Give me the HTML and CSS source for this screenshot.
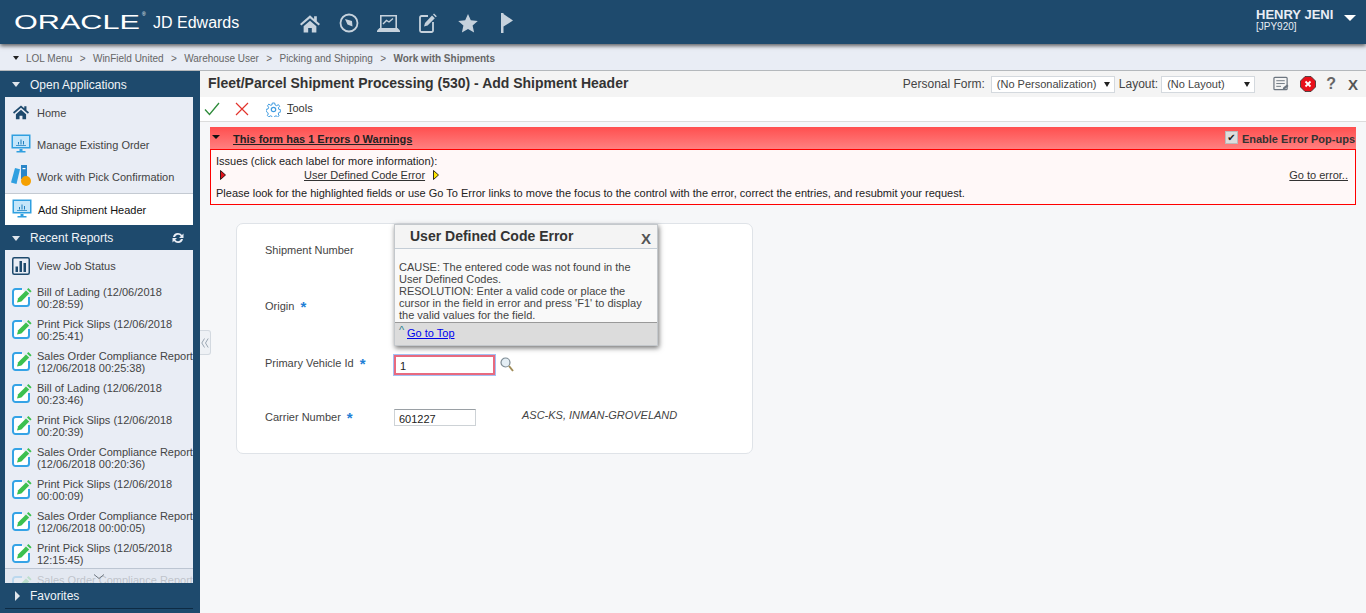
FILE: index.html
```html
<!DOCTYPE html>
<html>
<head>
  <title>Fleet/Parcel Shipment Processing - Add Shipment Header</title>
  <link rel="stylesheet" href="styles.css">
</head>
<body>
  <svg class="defs" width="0" height="0">
    <symbol id="i-monitor" viewBox="0 0 20 20">
      <rect x="0.5" y="0.5" width="19" height="14" fill="#2f9fe0"/>
      <rect x="2" y="2" width="16" height="11" fill="#c5e6fa"/>
      <path d="M7 10.500V8h1v2.500zM9.500 10.500V5.500h1v5zM12 10.500V7h1v3.500zM5 11h10v.7H5z" fill="#1f7fbe"/>
      <path d="M8.500 15h3v2h3v1.500h-9V17h3z" fill="#2f9fe0"/>
    </symbol>
    <symbol id="i-edit" viewBox="0 0 20 20">
      <path d="M10 2H3.500A2.500 2.500 0 0 0 1 4.500v12A2.500 2.500 0 0 0 3.500 19h11a2.500 2.500 0 0 0 2.500-2.500V10" fill="#fff" stroke="#35a3e6" stroke-width="2"/>
      <path d="M5 15.500l1.200-4.300L14 3.400l3.200 3.200-7.800 7.800z" fill="#3cc04f"/>
      <path d="M15 2.400l1.400-1.400 3.200 3.200-1.400 1.400z" fill="#3cc04f"/>
    </symbol>
  </svg>

  <header class="topbar">
    <div class="brand">
      <span class="oracle">ORACLE</span><sup class="reg">&reg;</sup>
      <span class="jde">JD Edwards</span>
    </div>
    <nav class="topnav">
      <svg width="20" height="19" viewBox="0 0 22 20"><path d="M11 1L0 10.500l1.500 1.800L11 4.300l9.500 8 1.500-1.800-3.500-3V2h-3v3z M4 13l7-6 7 6v7h-5v-5H9v5H4z" fill="#c6d2dd"/></svg>
      <svg width="20" height="20" viewBox="0 0 20 20"><circle cx="10" cy="10" r="8.500" fill="none" stroke="#c6d2dd" stroke-width="1.800"/><path d="M6 6l7 2 .5 5.500-5-2z" fill="#c6d2dd"/></svg>
      <svg width="23" height="18" viewBox="0 0 23 18"><path d="M3.800 14V1.800h15.400V14" fill="none" stroke="#c6d2dd" stroke-width="1.600"/><path d="M6 10l3.500-3.500 2.500 1.500 4-3.500" fill="none" stroke="#c6d2dd" stroke-width="1.400"/><path d="M2.500 14h18l2.500 2.500V18H0v-1.500z" fill="#c6d2dd"/></svg>
      <svg width="18" height="20" viewBox="0 0 18 20"><path d="M9 3H2.500A1.500 1.500 0 0 0 1 4.500v13A1.500 1.500 0 0 0 2.500 19h10a1.500 1.500 0 0 0 1.500-1.500V9" fill="none" stroke="#c6d2dd" stroke-width="1.800"/><path d="M5 13.500l1-3.500 7-7.500 2.800 2.700-7.200 7.300zM14 1.500l1-1 2.800 2.700-1 1z" fill="#c6d2dd"/></svg>
      <svg width="20" height="19" viewBox="0 0 20 19"><path d="M10 0l2.800 6.300 7 .7-5.200 4.600 1.500 6.900-6.100-3.600L3.900 18.500l1.500-6.900L.2 7l7-.7z" fill="#c6d2dd"/></svg>
      <svg width="12" height="20" viewBox="0 0 12 20"><path d="M0 0h2.500v20H0z M2.500 1L12 7.500l-9.500 6z" fill="#c6d2dd"/></svg>
    </nav>
    <div class="user">
      <div>
        <div class="user-name">HENRY JENI</div>
        <div class="user-env">[JPY920]</div>
      </div>
      <span class="user-caret"></span>
    </div>
  </header>

  <div class="crumbs">
    <span class="crumb-caret"></span>
    <span>LOL Menu</span><i>&gt;</i>
    <span>WinField United</span><i>&gt;</i>
    <span>Warehouse User</span><i>&gt;</i>
    <span>Picking and Shipping</span><i>&gt;</i>
    <b>Work with Shipments</b>
  </div>

  <div class="layout">
    <aside class="sidebar">
      <div class="side-head head-open"><span class="tri-down"></span>Open Applications</div>
      <ul class="side-list">
        <li class="side-item">
          <svg class="side-icon home-icon" width="16" height="16" viewBox="0 0 22 20"><path d="M11 1L0 10.500l1.500 1.800L11 4.300l9.500 8 1.500-1.800-3.500-3V2h-3v3z M4 13l7-6 7 6v7h-5v-5H9v5H4z" fill="#1e4a6d"/></svg>
          <span>Home</span>
        </li>
        <li class="side-item">
          <svg class="side-icon" width="20" height="20"><use href="#i-monitor"/></svg>
          <span>Manage Existing Order</span>
        </li>
        <li class="side-item">
          <svg class="side-icon work-icon" width="20" height="21" viewBox="0 0 20 21"><path d="M4 3l5 1.200L5.500 19 0 17.500z" fill="#2f9fe0"/><path d="M10 0h6v14h-6z" fill="#2a86c8"/><path d="M11.500 3h3v1.200h-3z" fill="#fff"/><circle cx="15" cy="16" r="5" fill="#f5a000"/></svg>
          <span>Work with Pick Confirmation</span>
        </li>
        <li class="side-item active">
          <svg class="side-icon" width="20" height="20"><use href="#i-monitor"/></svg>
          <span>Add Shipment Header</span>
        </li>
      </ul>

      <div class="side-head head-recent"><span class="tri-down"></span>Recent Reports
        <svg class="refresh" width="12" height="12" viewBox="0 0 12 12"><path d="M6 1a5 5 0 0 1 4 2l1.500-1.500V6H7l1.800-1.800A3.300 3.300 0 0 0 3 5H1a5 5 0 0 1 5-4zM6 11a5 5 0 0 1-4-2L.5 10.500V6H5L3.200 7.800A3.300 3.300 0 0 0 9 7h2a5 5 0 0 1-5 4z" fill="#e9edf5"/></svg>
      </div>
      <div class="reports">
        <ul class="side-list">
          <li class="side-item">
            <svg class="side-icon job-icon" width="18" height="18" viewBox="0 0 18 18"><rect x="0.750" y="0.750" width="16.500" height="16.500" rx="1.500" fill="none" stroke="#1e4a6d" stroke-width="1.500"/><path d="M3.500 15V9.500h2.500V15zM7.500 15V4h2.500v11zM11.500 15V6h2.500v9z" fill="#1e4a6d"/></svg>
            <span>View Job Status</span>
          </li>
          <li class="side-item report"><svg class="side-icon" width="20" height="20"><use href="#i-edit"/></svg><span>Bill of Lading (12/06/2018 00:28:59)</span></li>
          <li class="side-item report"><svg class="side-icon" width="20" height="20"><use href="#i-edit"/></svg><span>Print Pick Slips (12/06/2018 00:25:41)</span></li>
          <li class="side-item report"><svg class="side-icon" width="20" height="20"><use href="#i-edit"/></svg><span>Sales Order Compliance Report (12/06/2018 00:25:38)</span></li>
          <li class="side-item report"><svg class="side-icon" width="20" height="20"><use href="#i-edit"/></svg><span>Bill of Lading (12/06/2018 00:23:46)</span></li>
          <li class="side-item report"><svg class="side-icon" width="20" height="20"><use href="#i-edit"/></svg><span>Print Pick Slips (12/06/2018 00:20:39)</span></li>
          <li class="side-item report"><svg class="side-icon" width="20" height="20"><use href="#i-edit"/></svg><span>Sales Order Compliance Report (12/06/2018 00:20:36)</span></li>
          <li class="side-item report"><svg class="side-icon" width="20" height="20"><use href="#i-edit"/></svg><span>Print Pick Slips (12/06/2018 00:00:09)</span></li>
          <li class="side-item report"><svg class="side-icon" width="20" height="20"><use href="#i-edit"/></svg><span>Sales Order Compliance Report (12/06/2018 00:00:05)</span></li>
          <li class="side-item report"><svg class="side-icon" width="20" height="20"><use href="#i-edit"/></svg><span>Print Pick Slips (12/05/2018 12:15:45)</span></li>
          <li class="side-item report report-cut"><svg class="side-icon" width="20" height="20"><use href="#i-edit"/></svg><span>Sales Order Compliance Report</span></li>
        </ul>
        <div class="scroll-fade">
          <svg width="12" height="6" viewBox="0 0 12 6"><path d="M1 .5l5 4 5-4" fill="none" stroke="#6d7680"/></svg>
        </div>
      </div>
      <div class="side-head fav"><span class="tri-right"></span>Favorites</div>
      <div class="side-rule"></div>
    </aside>

    <div class="splitter">
      <svg width="8" height="10" viewBox="0 0 8 10"><path d="M3.500 .5L.8 5l2.700 4.500M7.200 .5L4.500 5l2.700 4.500" fill="none" stroke="#9aa6b2"/></svg>
    </div>

    <main class="content">
      <div class="titlebar">
        <h1>Fleet/Parcel Shipment Processing (530) - Add Shipment Header</h1>
        <div class="form-opts">
          <label>Personal Form:</label>
          <span class="combo combo-p">(No Personalization)<u></u></span>
          <label>Layout:</label>
          <span class="combo combo-l">(No Layout)<u></u></span>
          <svg class="tb-notes" width="16" height="16" viewBox="0 0 17 16"><rect x="1" y="1" width="14" height="13" rx="1" fill="#f4f4f4" stroke="#6d7680" stroke-width="1.300"/><path d="M3.500 4.500h9M3.500 7.500h9M3.500 10.500h5" stroke="#6d7680"/><path d="M10 14.500l1-3 4-3 1.500 1.500-4 3.500z" fill="#6d7680"/></svg>
          <svg class="tb-stop" width="16" height="16" viewBox="0 0 16 16"><path d="M5 .5h6L15.500 5v6L11 15.500H5L.5 11V5z" fill="#e8101a" stroke="#333" stroke-width=".8"/><path d="M5.500 5.500l5 5m0-5l-5 5" stroke="#fff" stroke-width="1.800"/></svg>
          <span class="tb-help">?</span>
          <span class="tb-close">X</span>
        </div>
      </div>

      <div class="toolbar">
        <svg width="16" height="14" viewBox="0 0 16 14"><path d="M1 7.500l4.500 5L15 1" fill="none" stroke="#2e8b3a" stroke-width="1.300"/></svg>
        <svg class="tb-cancel" width="14" height="14" viewBox="0 0 14 14"><path d="M1 1l12 12M13 1L1 13" stroke="#e2332b" stroke-width="1.200"/></svg>
        <svg class="tb-gear" width="15" height="15" viewBox="0 0 15 15"><circle cx="7.500" cy="7.500" r="2.200" fill="none" stroke="#3f9be0" stroke-width="1.200"/><path d="M6.300 1h2.400l.4 2 1.600.7 1.700-1.100 1.200 1.700-1.200 1.500.5 1.700 1.900.4v2l-1.900.5-.7 1.600 1 1.600-1.600 1.300-1.500-1.100-1.500.6-.4 1.900H6.300l-.4-1.900-1.500-.6-1.600 1.100-1.500-1.400 1-1.500-.7-1.600L.1 9.400v-2l1.900-.4.600-1.700L1.500 3.800l1.300-1.700 1.600 1.100L5.900 3z" fill="none" stroke="#3f9be0"/></svg>
        <span class="tb-tools"><span class="ul">T</span>ools</span>
      </div>

      <section class="errors">
        <div class="err-bar">
          <span class="err-caret"></span>
          <a class="err-title">This form has 1 Errors 0 Warnings</a>
          <span class="err-popups"><span class="check">&#10004;</span>Enable Error Pop-ups</span>
        </div>
        <div class="err-body">
          <div>Issues (click each label for more information):</div>
          <div class="err-row">
            <svg class="arrow-red" width="6" height="10" viewBox="0 0 6 10"><path d="M.5.500L5.500 5 .5 9.500z" fill="#e0101a" stroke="#000" stroke-width=".8"/></svg>
            <a class="err-link">User Defined Code Error</a>
            <svg class="arrow-yellow" width="6" height="10" viewBox="0 0 6 10"><path d="M.5.500L5.500 5 .5 9.500z" fill="#ffe600" stroke="#000" stroke-width=".8"/></svg>
            <a class="err-goto">Go to error..</a>
          </div>
          <div>Please look for the highlighted fields or use Go To Error links to move the focus to the control with the error, correct the entries, and resubmit your request.</div>
        </div>
      </section>

      <section class="card">
        <div class="field f-ship"><label>Shipment Number</label></div>
        <div class="field f-origin"><label>Origin <span class="req">*</span></label></div>
        <div class="field f-vehicle">
          <label>Primary Vehicle Id <span class="req">*</span></label>
          <input class="input input-error" type="text" value="1">
          <svg class="lookup" width="14" height="15" viewBox="0 0 14 15"><circle cx="5.500" cy="5.500" r="4.500" fill="#e4eef5" stroke="#7c8a93" stroke-width="1.200"/><path d="M9 9l4 5" stroke="#a08c58" stroke-width="2"/></svg>
        </div>
        <div class="field f-carrier">
          <label>Carrier Number <span class="req">*</span></label>
          <input class="input input-plain" type="text" value="601227">
          <span class="carrier-name">ASC-KS, INMAN-GROVELAND</span>
        </div>

        <div class="popup">
          <div class="popup-head">User Defined Code Error<span class="popup-x">X</span></div>
          <div class="popup-body">CAUSE: The entered code was not found in the User Defined Codes.<br>RESOLUTION: Enter a valid code or place the cursor in the field in error and press 'F1' to display the valid values for the field.</div>
          <div class="popup-foot"><span class="top-mark">^</span><a>Go to Top</a></div>
        </div>
      </section>
    </main>
  </div>
</body>
</html>
```

FILE: styles.css
```css
html, body {
  margin: 0;
  height: 613px;
  overflow: hidden;
}

body {
  font-family: "Liberation Sans", Arial, sans-serif;
  font-size: 11px;
  color: #333;
  background-color: #f6f7f9;
}

.defs {
  display: block;
  height: 0;
}

/* top bar */
.topbar {
  height: 44px;
  background-color: #1e4a6d;
  color: #fff;
  display: flex;
  align-items: center;
  box-shadow: 0 2px 4px rgba(0, 0, 0, .6);
  position: relative;
  z-index: 2;
}

.brand {
  width: 290px;
  padding-left: 14px;
  box-sizing: border-box;
  display: flex;
  align-items: center;
  white-space: nowrap;
  flex-shrink: 0;
}

.oracle {
  font-size: 20px;
  line-height: 20px;
  width: 128px;
  display: inline-block;
  transform-origin: left center;
  transform: scaleX(1.53);
}

.reg {
  font-size: 5px;
  margin-top: -16px;
  width: 11px;
}

.jde {
  font-size: 16px;
  margin-top: 1px;
}

.topnav {
  display: grid;
  grid-template-columns: repeat(6, 39.500px);
  justify-items: center;
  align-items: center;
  margin-top: 2px;
}

.user {
  margin-left: auto;
  display: flex;
  width: 110px;
  margin-top: -3px;
}

.user-name {
  font-size: 13px;
  font-weight: bold;
  line-height: 12px;
  color: #e9edf5;
}

.user-env {
  font-size: 10px;
  line-height: 11px;
  color: #e9edf5;
}

.user-caret {
  margin: 6px 0 0 11px;
  border: 6px solid transparent;
  border-top: 6px solid #fff;
  border-bottom: 0;
  height: 0;
}

/* breadcrumb */
.crumbs {
  height: 24px;
  padding-top: 2px;
  background-color: #e9edf5;
  border-bottom: 1px solid #b4b8bc;
  box-sizing: content-box;
  display: flex;
  align-items: center;
  padding-left: 13px;
  color: #666;
  font-size: 10px;
}

.crumbs i {
  font-style: normal;
  margin: 0 7.400px;
}

.crumb-caret {
  border: 3px solid transparent;
  border-top: 4px solid #222;
  border-bottom: 0;
  margin-right: 7px;
}

/* left side */
.layout {
  display: flex;
  height: 542px;
}

.sidebar {
  width: 200px;
  flex-shrink: 0;
  background-color: #1e4a6d;
  color: #fff;
}

.side-head {
  height: 25px;
  display: flex;
  align-items: center;
  font-size: 12px;
  padding-left: 30px;
  position: relative;
  color: #f0f4f8;
}

.head-open {
  height: 24px;
  padding-top: 2px;
}

.head-recent {
  padding-top: 1px;
  height: 24px;
}

.tri-down {
  position: absolute;
  left: 12px;
  top: 11px;
  border: 4.500px solid transparent;
  border-top: 5px solid #dfe5ec;
  border-bottom: 0;
}

.tri-right {
  position: absolute;
  left: 15px;
  top: 8px;
  border: 5px solid transparent;
  border-left: 5px solid #dfe5ec;
  border-right: 0;
}

.refresh {
  position: absolute;
  left: 172px;
  top: 7px;
}

.side-list {
  list-style: none;
  margin: 0 7px 0 5px;
  padding: 0;
  background-color: #e9edf5;
  color: #444;
}

.side-item {
  height: 32px;
  display: flex;
  align-items: center;
  padding-left: 32px;
  position: relative;
  line-height: 12px;
}

.side-icon {
  position: absolute;
  left: 6px;
  top: 5px;
}

.home-icon {
  left: 8px;
  top: 7px;
}

.work-icon {
  top: 4px;
}

.job-icon {
  left: 7px;
  top: 7px;
}

.side-item.active {
  background-color: #fff;
  color: #111;
  padding-left: 33px;
  border-top: 1px solid #c4cad2;
  box-sizing: border-box;
}

.active .side-icon {
  left: 7px;
}

.report span {
  width: 158px;
}

.report .side-icon {
  left: 7px;
}

.report-cut {
  align-items: flex-start;
  padding-top: 4px;
  box-sizing: border-box;
}

.reports {
  height: 333px;
  overflow: hidden;
  position: relative;
}

.scroll-fade {
  position: absolute;
  left: 5px;
  right: 7px;
  bottom: 0;
  height: 15px;
  background: rgba(226, 231, 239, .78);
  border-top: 1px solid #bcc5d2;
  box-sizing: border-box;
  text-align: center;
  line-height: 0;
  padding-top: 5px;
}

.side-rule {
  margin: 0 7px 0 5px;
  border-top: 1px solid #0e2b44;
}

.splitter {
  width: 10px;
  height: 23px;
  margin-top: 259px;
  background-color: #eef1f5;
  border: 1px solid #d3d9e0;
  border-left: 0;
  border-radius: 0 3px 3px 0;
  flex-shrink: 0;
  margin-right: -11px;
  display: flex;
  align-items: center;
  justify-content: center;
  position: relative;
  z-index: 1;
}

/* form area */
.content {
  flex: 1;
  min-width: 0;
}

.titlebar {
  height: 26px;
  display: flex;
  align-items: center;
  padding-left: 8px;
  background-color: #f4f4f4;
  box-sizing: border-box;
}

.titlebar h1 {
  margin: 0 0 2px;
  font-size: 14px;
  font-weight: bold;
  color: #333;
}

.form-opts {
  margin-left: auto;
  display: flex;
  align-items: center;
  font-size: 12px;
  color: #444;
}

.combo {
  height: 15px;
  line-height: 15px;
  background-color: #fff;
  border: 1px solid #d4d9de;
  font-size: 11px;
  padding-left: 5px;
  position: relative;
  box-sizing: content-box;
  margin: 0 4px 0 6px;
}

.combo u {
  position: absolute;
  right: 4px;
  top: 5px;
  border: 3px solid transparent;
  border-top: 5px solid #222;
  border-bottom: 0;
}

.combo-p {
  width: 117px;
}

.combo-l {
  width: 87px;
  margin: 0 18px 0 3px;
}

.tb-stop {
  margin-left: 11px;
}

.tb-help {
  font-size: 16px;
  font-weight: bold;
  color: #666;
  margin-left: 10px;
}

.tb-close {
  font-size: 15px;
  font-weight: bold;
  color: #555;
  margin: 0 8px 0 12px;
}

.toolbar {
  height: 25px;
  background-color: #fff;
  border-bottom: 1px solid #dcdcdc;
  box-sizing: border-box;
  display: flex;
  align-items: center;
  padding-left: 4px;
}

.tb-cancel {
  margin-left: 15px;
}

.tb-gear {
  margin-left: 17px;
}

.tb-tools {
  margin-left: 6px;
  margin-top: -2px;
}

.ul {
  text-decoration: underline;
}

.errors {
  margin: 5px 10px 0;
}

.err-bar {
  height: 22px;
  background: linear-gradient(#ff4f4f, #ff8080);
  position: relative;
  display: flex;
  align-items: center;
  padding-left: 23px;
  font-weight: bold;
  color: #222;
}

.err-caret {
  position: absolute;
  left: 2px;
  top: 8px;
  border: 4px solid transparent;
  border-top: 4px solid #111;
  border-bottom: 0;
}

.err-title {
  text-decoration: underline;
  margin-top: 1px;
}

.err-popups {
  margin-left: auto;
  margin-right: 1px;
  margin-top: -1px;
  color: #333;
}

.check {
  display: inline-block;
  width: 11px;
  height: 11px;
  line-height: 11px;
  font-size: 10px;
  text-align: center;
  color: #222;
  background-color: #ddd;
  border: 1px solid #bbb;
  margin-right: 4px;
  vertical-align: 2px;
  font-family: "DejaVu Sans", sans-serif;
  font-weight: normal;
}

.err-body {
  height: 56px;
  box-sizing: border-box;
  border: 1px solid #f00;
  background-color: #fff8f8;
  padding: 5px 5px 0;
  color: #222;
  line-height: 13px;
}

.err-row {
  display: flex;
  align-items: center;
  height: 14px;
  margin-bottom: 5px;
}

.arrow-red {
  margin-left: 4px;
}

.arrow-yellow {
  margin-left: 8px;
}

.err-link {
  margin-left: 78px;
  text-decoration: underline;
  color: #333;
}

.err-goto {
  margin-left: auto;
  margin-right: 2px;
  text-decoration: underline;
  color: #333;
}

.card {
  margin: 18px 0 0 36px;
  width: 517px;
  height: 231px;
  box-sizing: border-box;
  background-color: #fff;
  border: 1px solid #dfe3e8;
  border-radius: 7px;
  position: relative;
  padding: 0 0 0 28px;
  display: flex;
  flex-direction: column;
}

.field {
  display: flex;
  align-items: center;
  color: #444;
}

.field label {
  width: 129px;
  flex-shrink: 0;
}

.f-ship {
  margin-top: 19px;
  height: 13px;
}

.f-origin {
  margin-top: 43px;
  height: 13px;
}

.f-vehicle {
  margin-top: 41px;
  height: 20px;
}

.f-carrier {
  margin-top: 34px;
  height: 19px;
}

.req {
  color: #1f7fd6;
  font-size: 15px;
  font-weight: bold;
  line-height: 10px;
  margin-left: 3px;
  vertical-align: -2px;
}

.input {
  font-family: "Liberation Sans", Arial, sans-serif;
  font-size: 11px;
  color: #222;
  box-sizing: border-box;
  padding: 2px 0 0 4px;
  margin: 0;
  background-color: #fff;
  outline: none;
}

.input-error {
  width: 101px;
  height: 20px;
  margin-top: 3px;
  border: 2px solid #e86a7f;
  box-shadow: 0 0 0 1px #a4c0f4;
}

.input-plain {
  width: 82px;
  height: 17px;
  margin-top: 2px;
  border: 1px solid #cdd2d6;
  border-top-color: #9aa0a5;
}

.lookup {
  margin-left: 5px;
  margin-top: 3px;
}

.carrier-name {
  margin-left: 46px;
  margin-top: -4px;
  font-style: italic;
  color: #444;
}

.popup {
  position: absolute;
  left: 157px;
  top: 0;
  width: 264px;
  height: 122px;
  box-sizing: border-box;
  background-color: #f9f9f9;
  border: 1px solid #c4c8cc;
  box-shadow: 1px 2px 5px rgba(0, 0, 0, .55);
  display: flex;
  flex-direction: column;
}

.popup-head {
  height: 24px;
  line-height: 23px;
  padding-left: 15px;
  font-size: 14px;
  font-weight: bold;
  color: #333;
  background-color: #f4f4f4;
  border-bottom: 1px solid #c4cdd6;
  box-sizing: border-box;
  position: relative;
}

.popup-x {
  position: absolute;
  right: 6px;
  top: 2px;
  font-size: 15px;
  color: #555;
}

.popup-body {
  flex: 1;
  padding: 12px 4px 0;
  line-height: 12px;
  color: #444;
}

.popup-foot {
  height: 23px;
  box-sizing: border-box;
  padding: 3px 4px 0;
  background-color: #dcdcdc;
  border-top: 1px solid #999;
  line-height: 14px;
  display: flex;
}

.popup-foot a {
  color: #00e;
  text-decoration: underline;
}

.top-mark {
  color: #2a7f8f;
  font-size: 11px;
  width: 8px;
  margin-top: -3px;
}
```
